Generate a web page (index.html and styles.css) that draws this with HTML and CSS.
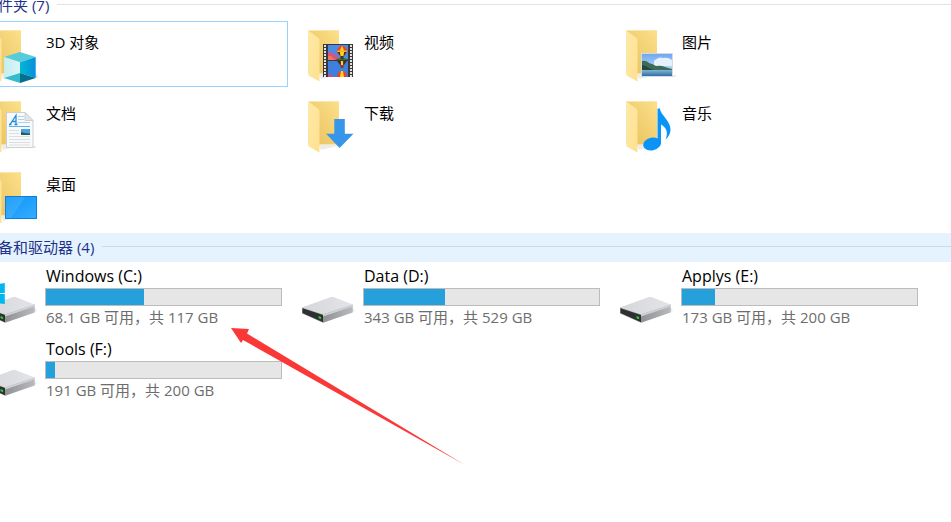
FILE: index.html
```html
<!DOCTYPE html>
<html lang="zh-CN">

<head>
    <meta charset="UTF-8">
    <meta name="viewport" content="width=device-width, initial-scale=1.0">
    <title>此电脑</title>
    <link rel="stylesheet" href="styles.css">
</head>

<body>
    <!-- shared shapes -->
    <svg class="defs" width="0" height="0" aria-hidden="true">
        <defs>
            <linearGradient id="folder-back" x1="0" y1="1" x2="1" y2="0">
                <stop offset="0" stop-color="#e6c05c" />
                <stop offset="1" stop-color="#fde08a" />
            </linearGradient>
            <linearGradient id="folder-front" x1="0" y1="0" x2="1" y2="1">
                <stop offset="0" stop-color="#ffe9a6" />
                <stop offset="1" stop-color="#fde190" />
            </linearGradient>
            <linearGradient id="drive-top" x1="0" y1="0" x2="1" y2="0">
                <stop offset="0" stop-color="#d6d7da" />
                <stop offset="1" stop-color="#e3e4e8" />
            </linearGradient>
            <linearGradient id="drive-side" x1="0" y1="0" x2="1" y2="0">
                <stop offset="0" stop-color="#909193" />
                <stop offset="1" stop-color="#b9babd" />
            </linearGradient>
            <linearGradient id="blue" x1="0" y1="0" x2="1" y2="1">
                <stop offset="0" stop-color="#0a94f8" />
                <stop offset="1" stop-color="#36adff" />
            </linearGradient>
            <linearGradient id="cube-left" x1="0" y1="0" x2="1" y2="0">
                <stop offset="0" stop-color="#c3eef0" />
                <stop offset="1" stop-color="#dcf5f8" />
            </linearGradient>
            <linearGradient id="cube-right" x1="0" y1="0" x2="1" y2="0">
                <stop offset="0" stop-color="#00b7d4" />
                <stop offset="1" stop-color="#0a8fdc" />
            </linearGradient>
            <linearGradient id="sky" x1="0" y1="0" x2="0" y2="1">
                <stop offset="0" stop-color="#6fa8f0" />
                <stop offset="1" stop-color="#d9ebfa" />
            </linearGradient>
            <linearGradient id="sea" x1="0" y1="0" x2="0" y2="1">
                <stop offset="0" stop-color="#8fc0dc" />
                <stop offset="1" stop-color="#2f6fa6" />
            </linearGradient>
            <symbol id="folder" viewBox="1 0 64 64">
                <path d="M22 52h22l-20 5z" fill="#ececec" />
                <path d="M11.500 8h30.500v43.500H11.500z" fill="url(#folder-back)" />
                <path d="M11.500 8h30.500v1H11.500z" fill="#fbe7ae" />
                <path d="M11.500 8.500 21.500 16q1 1 1 2.500V58.500q0 1-1 .5L11.500 53.500z" fill="url(#folder-front)" />
            </symbol>
            <symbol id="drive" viewBox="0 0 64 64">
                <path d="M25 55 57 43l-2-3-30 12z" fill="#e9e9e9" />
                <path d="M4 39.500 31.500 29.500q2-1 4-.5L54.700 36.500 25 47z" fill="url(#drive-top)" />
                <path d="M25 46.500 54.700 36.500v8L25 54.700z" fill="url(#drive-side)" />
                <path d="M25 46.500 54.700 36.500v2L25 48.500z" fill="#cfd0d3" />
                <path d="M4 39.500 25 46.500v8.200L4 45.500z" fill="#9fa0a2" />
                <path d="M4.500 40.300 25 47v7.200L4.500 45z" fill="#2e2f31" />
                <path d="M20.500 48l2.600.9v2.300l-2.600-1z" fill="#27d13a" />
            </symbol>
        </defs>
    </svg>

    <main class="explorer">
        <section class="group">
            <h2 class="group-header">文件夹 (7)</h2>
            <div class="tiles">
                <a class="tile selected" href="#3d">
                    <svg class="icon" viewBox="0 0 64 64" aria-hidden="true">
                        <use href="#folder" />
                        <path d="M40 61 59 55l-3-3-16 7z" fill="#e6e6e6" />
                        <path d="M24 35 40 30l15.700 5L40 40.300z" fill="#56cbdc" />
                        <path d="M24 35 40 40.300V51l-16 5z" fill="url(#cube-left)" />
                        <path d="M40 40.300 55.700 35v21L40 51z" fill="url(#cube-right)" />
                        <path d="M24 56l16-5v10z" fill="#35bccb" />
                        <path d="M40 51l15.700 5L40 61z" fill="#04708f" />
                    </svg>
                    <span class="name">3D 对象</span>
                </a>
                <a class="tile" href="#videos">
                    <svg class="icon" viewBox="0 0 64 64" aria-hidden="true">
                        <use href="#folder" />
                        <path d="M25 22h30v33H25z" fill="#38383a" />
                        <path d="M27 23v32M53 23v32" stroke="#e4e4e4" stroke-width="2" stroke-dasharray="2 1" />
                        <svg x="30" y="23" width="20" height="15" viewBox="0 0 20 15">
                            <path d="M0 0h20v15H0z" fill="#4c8ae6" />
                            <path d="M0 8l3-1 3 3 2-1 4 6H0z" fill="#e0507c" />
                            <path d="M0 11l3 0 4 4H0z" fill="#f07a50" />
                            <path d="M8 14l6-1 6 1v1H8z" fill="#35702f" />
                            <path d="M12.500 10h3v4h-3z" fill="#4a3216" />
                            <circle cx="14" cy="6" r="5" fill="#e8452c" />
                            <path d="M9.500 7h9l-2.500 4h-4z" fill="#3c3422" />
                            <path d="M14 1q-3 4-1.500 10h3Q17 5 14 1z" fill="#ffd21c" />
                            <path d="M9.300 5.500h9.400v1.500H9.300z" fill="#f6b91c" />
                        </svg>
                        <svg x="30" y="39" width="20" height="16" viewBox="0 0 20 16">
                            <path d="M0 0h20v16H0z" fill="#3f7fe0" />
                            <path d="M9 0h10l-3 4h-4z" fill="#3c3422" />
                            <path d="M12.500 0h3v7h-3z" fill="#8c3a20" />
                            <path d="M13 0h2v4h-2z" fill="#ffd21c" />
                            <path d="M0 14l3-1 3 3H0z" fill="#c8508a" />
                            <circle cx="14" cy="15" r="5" fill="#e8452c" />
                            <path d="M13 10h2l1 6h-4z" fill="#ffd21c" />
                        </svg>
                    </svg>
                    <span class="name">视频</span>
                </a>
                <a class="tile" href="#pictures">
                    <svg class="icon" viewBox="0 0 64 64" aria-hidden="true">
                        <use href="#folder" />
                        <path d="M26 55h34v-2H26z" fill="#ededed" />
                        <path d="M25 31h32v24H25z" fill="#d4dbe2" />
                        <path d="M26 32h30v22H26z" fill="url(#sky)" />
                        <path d="M38 39q5-5 9-3 5-1 9 2v6H38z" fill="#e6f1fb" />
                        <path d="M26 47h30v7H26z" fill="url(#sea)" />
                        <path d="M26 39q4-1 7 2 4 1 7 3 5-1 9 1l7 2v1H26z" fill="#3e6b55" />
                        <path d="M26 43q5 1 7 3l5 2H26z" fill="#25483c" />
                    </svg>
                    <span class="name">图片</span>
                </a>
                <a class="tile" href="#documents">
                    <svg class="icon" viewBox="0 0 64 64" aria-hidden="true">
                        <use href="#folder" />
                        <path d="M27 55h28l1-2H27z" fill="#e3e3e3" />
                        <path d="M26.500 19.500H45l8 8v27H26.500z" fill="#f8f9fa" stroke="#cdd0d3" />
                        <path d="M45 19.500v8h8z" fill="#e3e6e8" stroke="#cdd0d3" />
                        <path d="M30 31.500 36 22.500v9M32 28.500h4M29 31.500h2.500M34.500 31.500h3" fill="none" stroke="#1f8fdc" stroke-width="1.300" />
                        <path d="M38 23.500h6M38 26.500h6M38 29.500h12" stroke="#a9d3f0" />
                        <path d="M29 33.500h21" stroke="#5fb0e8" />
                        <path d="M29 37.500h10M29 40.500h10M29 43.500h21M29 46.500h21M29 49.500h21M29 52h21" stroke="#dcdfe1" />
                        <path d="M41 36h9v6h-9z" fill="#4aa3e0" />
                        <path d="M41 39l4 1 5 .5V42h-9z" fill="#2c5a63" />
                    </svg>
                    <span class="name">文档</span>
                </a>
                <a class="tile" href="#downloads">
                    <svg class="icon" viewBox="0 0 64 64" aria-hidden="true">
                        <use href="#folder" />
                        <path d="M36.300 26h10.500v14.700H55.500L41.600 55 28 40.700h8.300z" fill="#3896ea" />
                    </svg>
                    <span class="name">下载</span>
                </a>
                <a class="tile" href="#music">
                    <svg class="icon" viewBox="0 0 64 64" aria-hidden="true">
                        <use href="#folder" />
                        <ellipse cx="36" cy="51" rx="9" ry="6.300" transform="rotate(-12 36 51)" fill="#0a94f8" />
                        <path d="M41.500 15.500h2.300c1 7 10.700 12 10.700 21 0 4-2 7.500-5 10 3-7 1-12-4.500-15V51h-3.500z" fill="#0a94f8" />
                    </svg>
                    <span class="name">音乐</span>
                </a>
                <a class="tile" href="#desktop">
                    <svg class="icon" viewBox="0 0 64 64" aria-hidden="true">
                        <use href="#folder" />
                        <path d="M25 32h32v23H25z" fill="url(#blue)" />
                        <path d="M26 32h20L31 54h-5z" fill="#fff" opacity=".1" />
                        <path d="M25.500 32.500h31v22h-31z" fill="none" stroke="#0b7fd6" />
                    </svg>
                    <span class="name">桌面</span>
                </a>
            </div>
        </section>

        <section class="group">
            <h2 class="group-header active">设备和驱动器 (4)</h2>
            <div class="tiles drives">
                <a class="tile" href="#c">
                    <svg class="icon" viewBox="0 0 64 64" aria-hidden="true">
                        <use href="#drive" />
                        <path d="M4 18l9-1.300v8.300H4zM14 16.600l10.800-1.500V25H14zM4 26h9v8.500L4 33.200zM14 26h10.800v10L14 34.600z" fill="#00b8f1" />
                    </svg>
                    <div class="info">
                        <label class="name" for="bar-c">Windows (C:)</label>
                        <progress id="bar-c" class="bar" max="235" value="98"></progress>
                        <span class="space">68.1 GB 可用，共 117 GB</span>
                    </div>
                </a>
                <a class="tile" href="#d">
                    <svg class="icon" viewBox="0 0 64 64" aria-hidden="true"><use href="#drive" /></svg>
                    <div class="info">
                        <label class="name" for="bar-d">Data (D:)</label>
                        <progress id="bar-d" class="bar" max="235" value="81"></progress>
                        <span class="space">343 GB 可用，共 529 GB</span>
                    </div>
                </a>
                <a class="tile" href="#e">
                    <svg class="icon" viewBox="0 0 64 64" aria-hidden="true"><use href="#drive" /></svg>
                    <div class="info">
                        <label class="name" for="bar-e">Applys (E:)</label>
                        <progress id="bar-e" class="bar" max="235" value="33"></progress>
                        <span class="space">173 GB 可用，共 200 GB</span>
                    </div>
                </a>
                <a class="tile" href="#f">
                    <svg class="icon" viewBox="0 0 64 64" aria-hidden="true"><use href="#drive" /></svg>
                    <div class="info">
                        <label class="name" for="bar-f">Tools (F:)</label>
                        <progress id="bar-f" class="bar" max="235" value="9"></progress>
                        <span class="space">191 GB 可用，共 200 GB</span>
                    </div>
                </a>
                <svg class="pointer" viewBox="0 0 234 138" aria-hidden="true">
                    <path d="M0 0 18 1 16 5.500 234 137 12 12 10 15z" fill="#fb3838" />
                </svg>
            </div>
        </section>
    </main>
</body>

</html>
```
FILE: styles.css
```css
* {
    box-sizing: border-box;
}

body {
    margin: 0;
    min-height: 100vh;
    background: #fff;
    color: #000;
    font-family: "Open Sans", "Noto Sans CJK SC", sans-serif;
    font-size: 15px;
    line-height: 20px;
    overflow: hidden;
}

.defs {
    position: absolute;
}

/* the list is scrolled a little down and to the right */
.explorer {
    margin: -9px 0 0 -24px;
}

.group-header {
    display: flex;
    align-items: center;
    gap: 8px;
    height: 29px;
    margin: 0;
    padding: 0 0 2px 7px;
    color: #1e3287;
    font-size: 15px;
    font-weight: normal;
}

.group-header::after {
    content: "";
    flex: 1;
    height: 1px;
    background: #e2e2e2;
}

.group-header.active {
    background: #e5f3ff;
}

.group-header.active::after {
    background: #ccd9e6;
}

.tiles {
    display: grid;
    grid-template-columns: repeat(auto-fill, 312px);
    gap: 5px 6px;
    padding: 1px 0 4px;
}

.tile {
    display: flex;
    align-items: flex-start;
    height: 66px;
    padding-left: 4px;
    border: 1px solid transparent;
    border-left: 0;
    color: inherit;
    text-decoration: none;
}

.tile.selected {
    border-color: #99d1ff;
}

.icon {
    width: 64px;
    height: 64px;
    flex: none;
}

.name {
    display: block;
    padding-left: 2px;
}

.tiles:not(.drives) .name {
    margin-top: 10px;
}

.drives {
    position: relative;
}

.drives .tile {
    height: 68px;
    padding-top: 2px;
}

.drives .icon {
    margin-top: 2px;
}

.drives .name {
    padding: 0 0 2px 1px;
    font-size: 16px;
}

.info {
    margin-left: 1px;
}

.bar {
    display: block;
    width: 237px;
    height: 18px;
    border: 1px solid #bcbcbc;
    background: #e6e6e6;
    appearance: none;
}

.bar::-webkit-progress-bar {
    background: #e6e6e6;
}

.bar::-webkit-progress-value {
    background: #26a0da;
}

.space {
    display: block;
    margin-top: 1px;
    padding-left: 1px;
    color: #6d6d6d;
}

.pointer {
    position: absolute;
    top: 66px;
    left: 255px;
    width: 234px;
    height: 138px;
}
```
